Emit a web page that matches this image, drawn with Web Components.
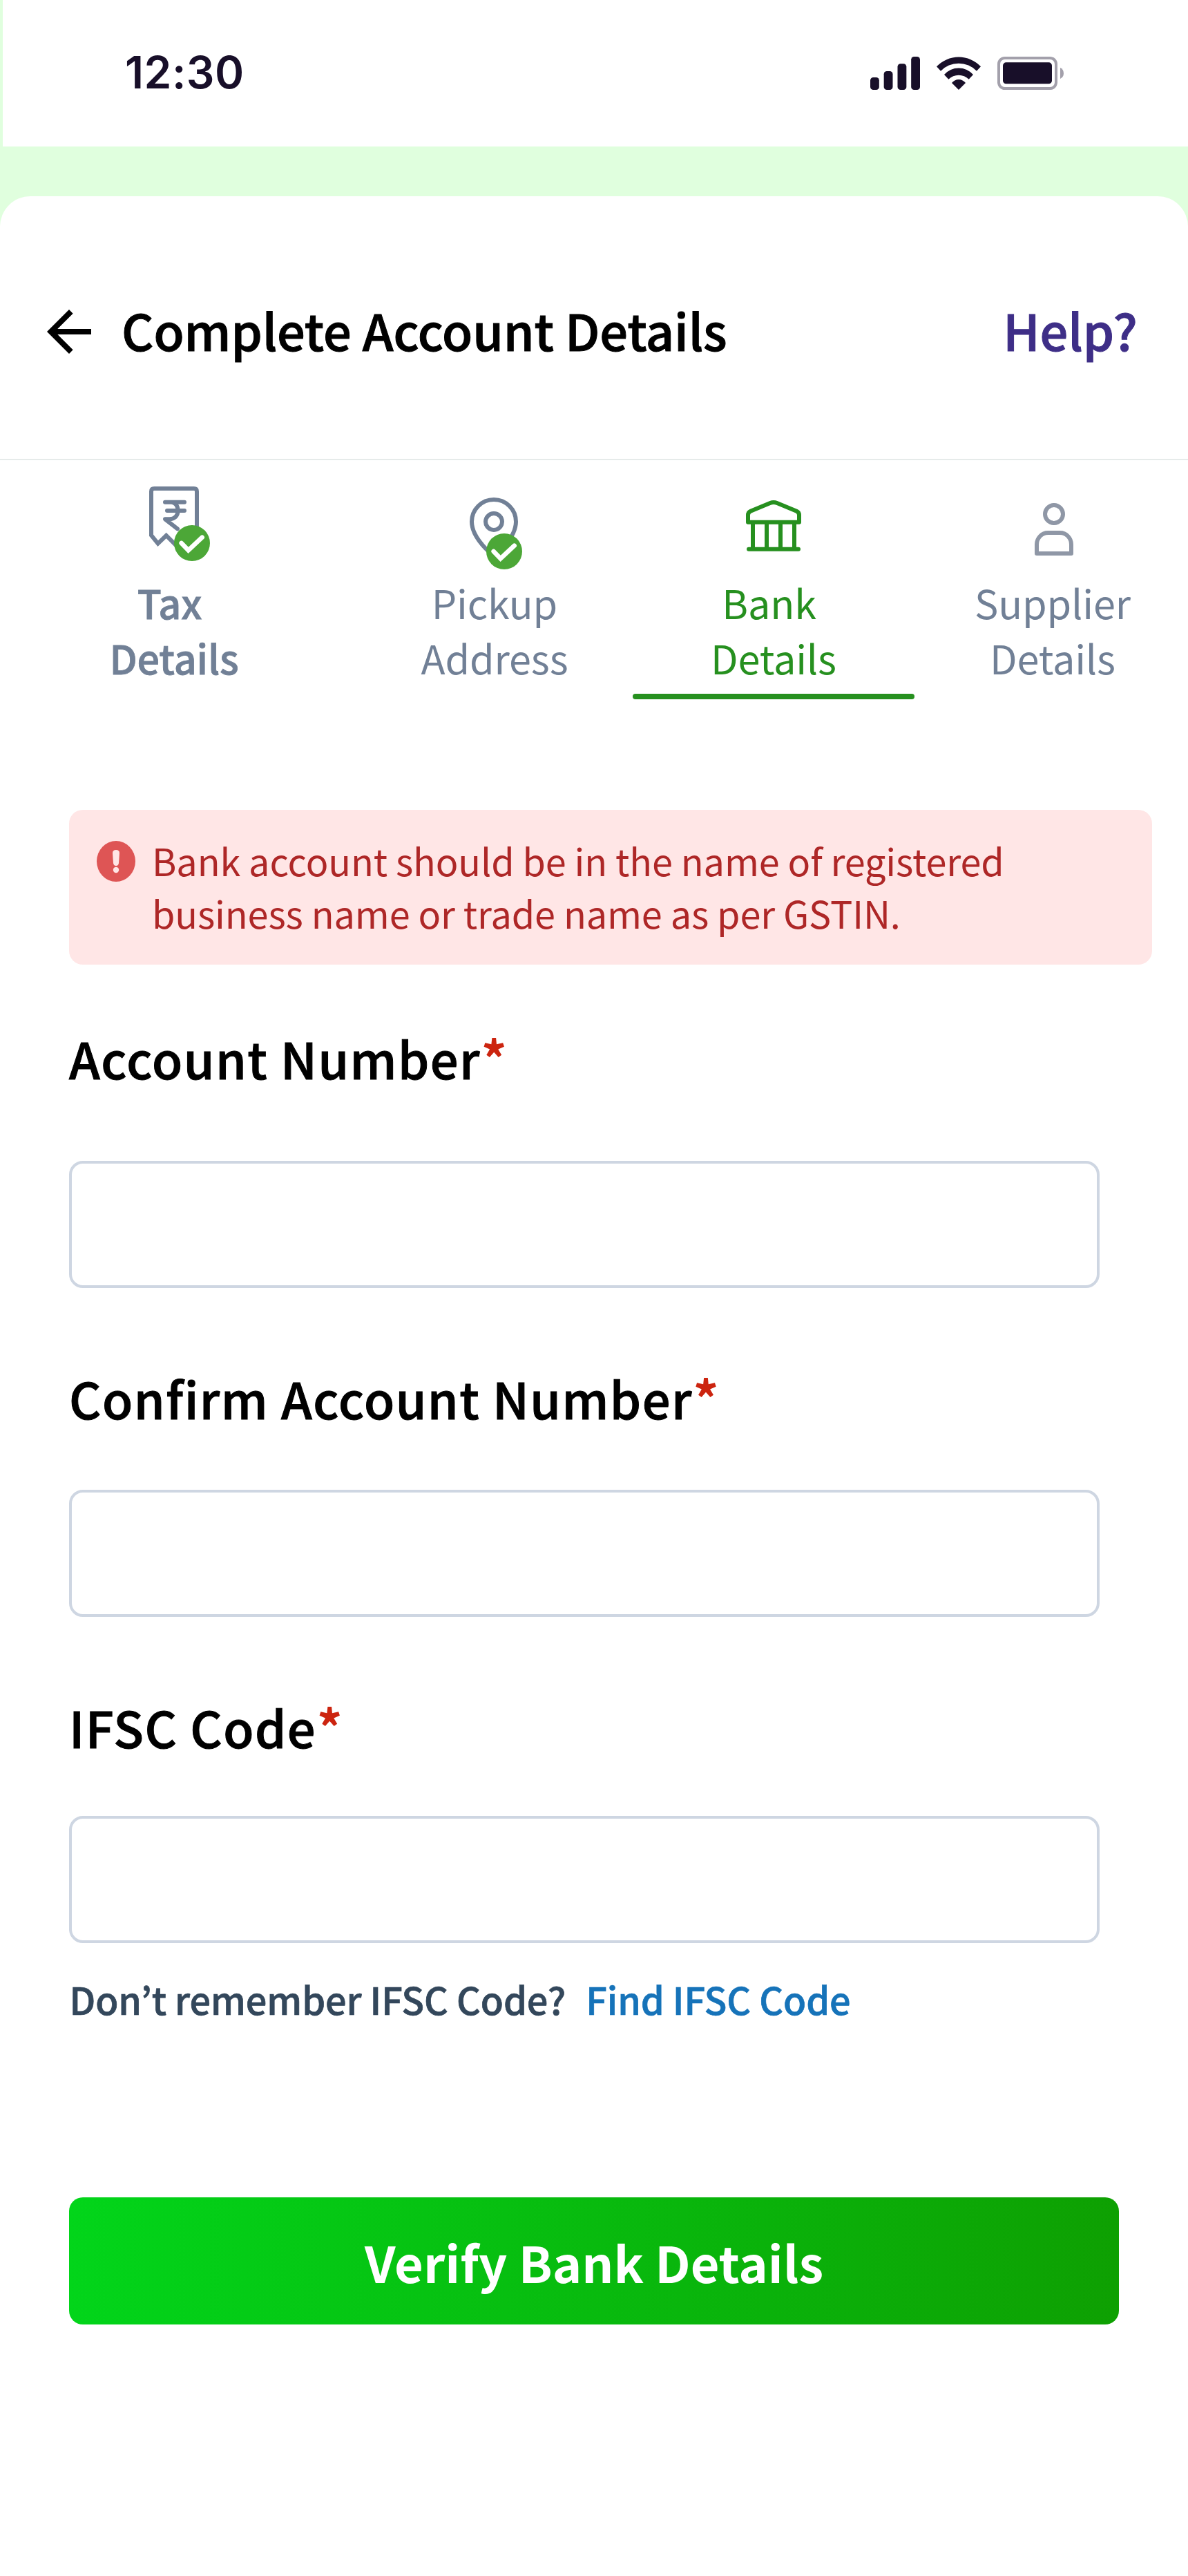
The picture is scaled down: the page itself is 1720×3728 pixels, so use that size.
<!DOCTYPE html>
<html lang="en">
<head>
<meta charset="utf-8">
<title>Complete Account Details</title>
<style>
  html, body { margin: 0; background: #fff; }
  body { font-family: "Noto Sans CJK KR", "Noto Sans", sans-serif; color: #000; }
</style>
</head>
<body>
<account-screen></account-screen>

<script>
(() => {
const component = (name, html) => {
  customElements.define(name, class extends HTMLElement {
    connectedCallback() {
      if (this.shadowRoot) return;
      this.attachShadow({ mode: 'open' }).innerHTML = html;
    }
  });
};

component('status-bar', `
  <style>
    :host { display: flex; justify-content: space-between; align-items: flex-start; box-sizing: border-box;
      height: 212px; margin-left: 4px; padding: 66px 180px 0 177px; background: #fff; color: #180f29; }
    time { font: 600 64px/78px Inter, sans-serif; letter-spacing: .5px; }
    svg { display: block; width: 280px; height: 48px; margin-top: 16px; }
  </style>
  <time>12:30</time>
  <svg viewBox="0 0 840 144" fill="currentColor">
    <rect x="0" y="90" width="38.5" height="54" rx="13"/>
    <rect x="59" y="63" width="38.5" height="81" rx="13"/>
    <rect x="118.5" y="30.5" width="38.5" height="113.5" rx="13"/>
    <rect x="177.5" y="0" width="38.5" height="144" rx="13"/>
    <path d="M288 43A132 132 0 0 1 480 43L462 62.5A108 108 0 0 0 306 62.5Z"/>
    <path d="M321 78A84 84 0 0 1 447 78L428 98A63 63 0 0 0 340 98Z"/>
    <path d="M354 114A38 38 0 0 1 414 114L384 144Z"/>
    <rect x="558" y="6" width="249" height="132" rx="26" fill="none" stroke="#a3a0ab" stroke-width="12"/>
    <rect x="576" y="25" width="213" height="93" rx="14"/>
    <path d="M825 48Q840 55 840 72T825 96Z" fill="#a3a0ab"/>
  </svg>`);

component('page-header', `
  <style>
    :host { display: flex; align-items: flex-start; box-sizing: border-box; height: 382px;
      padding: 145px 73px 0 52px; border-bottom: 2px solid #e6ebea; font-weight: 500; font-size: 72px; line-height: 96px;
      -webkit-text-stroke: 1px; }
    svg { display: block; width: 96px; height: 96px; margin: 3px 28px 0 0; }
    h1 { flex: 1; margin: 0; font: inherit; letter-spacing: -.1px; }
    a { color: #3e2e87; }
  </style>
  <svg viewBox="0 0 24 24"><path d="M12 4l1.41 1.41L7.83 11H20v2H7.83l5.58 5.59L12 20l-8-8z"/></svg>
  <h1><slot></slot></h1>
  <a><slot name="action"></slot></a>`);

component('step-tab', `
  <style>
    :host { display: flex; flex-direction: column; align-items: center; box-sizing: border-box;
      height: 308px; padding-left: var(--shift, 0); color: #718096; font-size: 57.6px; line-height: 80px; text-align: center; letter-spacing: -.15px; }
    :host([active]) { color: #26901f; }
    :host([strong]) { font-weight: 500; -webkit-text-stroke: .8px; }
    ::slotted(svg) { display: block; width: 120px; height: 120px; margin-bottom: 7px; overflow: visible;
      fill: none; stroke: currentColor; stroke-width: 18; }
    .first { padding-right: var(--trail, 0); }
    .bar { display: none; width: 408px; height: 8px; margin-top: 13px; border-radius: 4px; background: currentColor; }
    :host([active]) .bar { display: block; }
  </style>
  <slot name="icon"></slot>
  <span class="first"><slot name="first"></slot></span>
  <span><slot name="second"></slot></span>
  <div class="bar"></div>`);

component('alert-banner', `
  <style>
    :host { display: flex; align-items: flex-start; box-sizing: border-box; width: 1568px; height: 224px; margin-top: 160px;
      padding: 35px 40px 0; gap: 24px; border-radius: 20px; background: #ffe6e6; color: #ae2727;
      font-size: 54px; line-height: 76px; letter-spacing: -.12px; }
    svg { display: block; flex: none; width: 56px; height: 59px; margin-top: 10px; }
    p { margin: 0; white-space: nowrap; }
  </style>
  <svg viewBox="0 0 56 59">
    <ellipse cx="28" cy="29.5" rx="28" ry="29.5" fill="#de5555"/>
    <path d="M23 17.5Q23 13 28 13T33 17.5L32 32Q31.5 36 28 36T24 32Z" fill="#ffe6e6"/>
    <circle cx="28" cy="42" r="4.2" fill="#ffe6e6"/>
  </svg>
  <p><slot></slot></p>`);

component('form-field', `
  <style>
    :host { display: block; margin-top: var(--top); }
    label { display: block; height: 100px; font-weight: 500; font-size: 72px; line-height: 100px; letter-spacing: 1.5px; white-space: nowrap;
      -webkit-text-stroke: 1px; }
    b { margin-left: 1px; color: #cc240f; font-weight: 700; line-height: 0; vertical-align: 2px; -webkit-text-stroke: 0; }
    input { display: block; box-sizing: border-box; width: 1492px; height: 184px; margin: var(--gap) 0 0; padding: 0 40px;
      border: 4px solid #ced6e2; border-radius: 20px; outline: 0; background: #fff; font: inherit; font-size: 60px; }
  </style>
  <label><slot></slot><b>*</b></label>
  <input type="text">`);

component('helper-line', `
  <style>
    :host { display: flex; gap: 29px; padding-left: .5px; margin-top: 43px; height: 76px; font-weight: 500; font-size: 54px; line-height: 76px;
      letter-spacing: -.08px; color: #33475b; -webkit-text-stroke: .7px; }
    a { color: #1673b9; }
  </style>
  <span><slot></slot></span><a><slot name="link"></slot></a>`);

component('primary-button', `
  <style>
    :host { display: block; margin-top: 249px; }
    button { display: block; width: 1520px; height: 184px; padding: 2px 0 0; border: 0; border-radius: 20px;
      background: linear-gradient(90deg, #02d51a, #0ea002); color: #fff; font: 700 72px/100px "Noto Sans CJK KR", sans-serif; }
  </style>
  <button><slot></slot></button>`);

component('account-screen', `
  <style>
    :host { display: flex; flex-direction: column; box-sizing: border-box; width: 1720px; height: 3728px; background: linear-gradient(#e0ffde 400px, #fff 400px); }
    main { flex: 1; box-sizing: border-box; margin-top: 72px; border-radius: 44px 44px 0 0; background: #fff; overflow: hidden; }
    nav { display: grid; grid-template-columns: 504px 412px 408px 396px; padding-top: 38px; }
    form { padding-left: 100px; }
  </style>
  <status-bar></status-bar>
  <main>
    <page-header>Complete Account Details<span slot="action">Help?</span></page-header>
    <nav>
      <step-tab strong style="--trail:13px">
        <svg slot="icon" viewBox="216 72 360 360">
          <path d="M405 328L362 285L326 320L297 284V94Q297 81 310 81H482Q495 81 495 94V270"/>
          <path d="M357 140H441M366 177H441M384 140C402 140 413 158 413 177C413 198 398 214 376 214H357L411 256" stroke-linecap="round" stroke-linejoin="round"/>
          <circle cx="474" cy="318" r="78" fill="#4ca737" stroke="none"/>
          <path d="M428 318L458 349L518 293" stroke="#fff" stroke-width="20" stroke-linecap="round"/>
        </svg>
        <span slot="first">Tax</span><span slot="second">Details</span>
      </step-tab>
      <step-tab style="--shift:12px">
        <svg slot="icon" viewBox="288 72 360 360">
          <path d="M465 375C415 332 369 277 369 225A96 96 0 0 1 561 225C561 277 515 332 465 375Z"/>
          <circle cx="465" cy="225" r="36"/>
          <circle cx="510" cy="354" r="78" fill="#4ca737" stroke="none"/>
          <path d="M464 354L494 385L554 329" stroke="#fff" stroke-width="20" stroke-linecap="round"/>
        </svg>
        <span slot="first">Pickup</span><span slot="second">Address</span>
      </step-tab>
      <step-tab active style="--trail:13px">
        <svg slot="icon" viewBox="480 72 360 360" stroke-linejoin="round">
          <path d="M549 227V196Q549 184 560 179L645 144Q660 138 675 144L760 179Q771 184 771 196V227Z"/>
          <path d="M570 227V344M630 227V344M690 227V344M750 227V344"/>
          <path d="M552 344.5H768" stroke-linecap="round"/>
        </svg>
        <span slot="first">Bank</span><span slot="second">Details</span>
      </step-tab>
      <step-tab style="--shift:4px">
        <svg slot="icon" viewBox="252 72 360 360" stroke-linejoin="round" style="color:#8f97a6">
          <circle cx="438" cy="192" r="39"/>
          <path d="M363 363V324C363 296 385 273 412 273H464C491 273 513 296 513 324V363Z"/>
        </svg>
        <span slot="first">Supplier</span><span slot="second">Details</span>
      </step-tab>
    </nav>
    <form>
      <alert-banner>Bank account should be in the name of registered<br>business name or trade name as per GSTIN.</alert-banner>
      <form-field style="--top:85px;--gap:99px">Account Number</form-field>
      <form-field style="--top:109px;--gap:83px">Confirm Account Number</form-field>
      <form-field style="--top:109px;--gap:79px">IFSC Code</form-field>
      <helper-line>Don’t remember IFSC Code?<span slot="link">Find IFSC Code</span></helper-line>
      <primary-button>Verify Bank Details</primary-button>
    </form>
  </main>`);
})();
</script>
</body>
</html>
